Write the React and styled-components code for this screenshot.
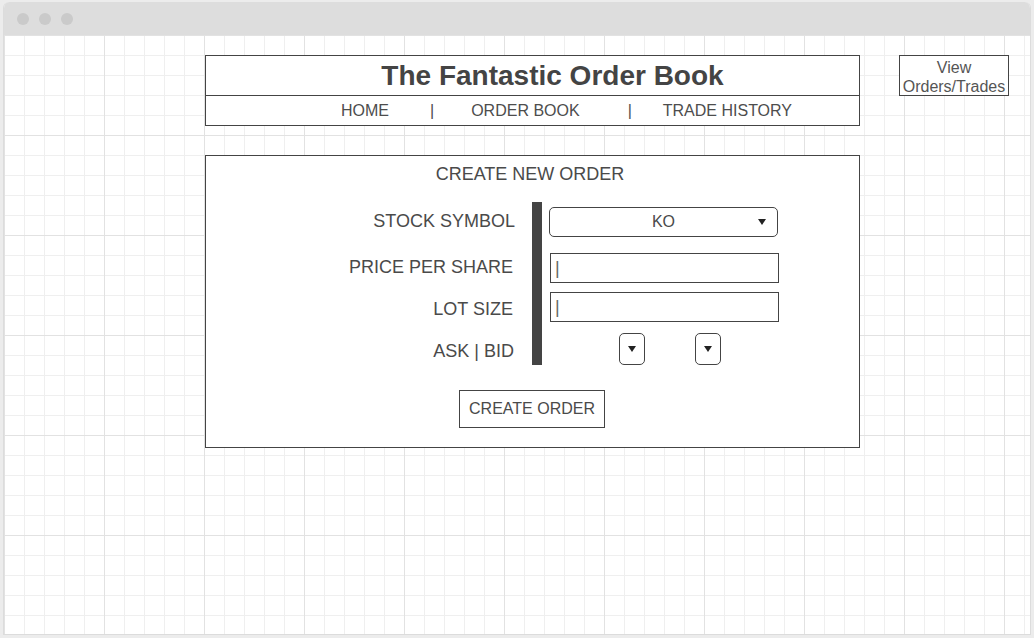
import React from 'react'
import styled, { createGlobalStyle } from 'styled-components';

const GlobalStyle = createGlobalStyle`
    html, body {
        margin: 0;
        padding: 0;
        height: 638px;
        overflow: hidden;
        background: #ececec;
        font-family: "Liberation Sans", Arial, sans-serif;
        color: #4a4a4a;
    }
`;

const Window = styled.div`
    margin: 2px 0 0 3px;
    width: 1026px;
    height: 632px;
    border: 1px solid #dcdcdc;
    border-top: none;
    border-radius: 6px 6px 0 0;
    background: #fff;
    display: flex;
    flex-direction: column;
    overflow: hidden;
`;

const TitleBar = styled.div`
    height: 33px;
    flex-shrink: 0;
    background: #dddddd;
    display: flex;
    align-items: center;
    gap: 10px;
    padding-left: 13px;
`;

const Dot = styled.span`
    width: 12px;
    height: 12px;
    border-radius: 50%;
    background: #cacaca;
`;

const Canvas = styled.div`
    flex: 1;
    display: flex;
    align-items: flex-start;
    padding: 20px 0 0 201px;
    background-color: #fff;
    background-image:
        linear-gradient(to right, #e2e2e2 1px, transparent 1px),
        linear-gradient(to bottom, #e2e2e2 1px, transparent 1px),
        linear-gradient(to right, #efefef 1px, transparent 1px),
        linear-gradient(to bottom, #efefef 1px, transparent 1px);
    background-size: 100px 100px, 100px 100px, 20px 20px, 20px 20px;
    background-position: 0 0;
`;

const MainColumn = styled.div`
    width: 655px;
    display: flex;
    flex-direction: column;
`;

const Header = styled.div`
    border: 1px solid #444;
    background: #fff;
`;

const Title = styled.h1`
    margin: 0;
    height: 39px;
    border-bottom: 1px solid #444;
    display: flex;
    align-items: center;
    justify-content: center;
    padding-left: 40px;
    font-size: 28px;
    font-weight: bold;
    color: #444;
`;

const Nav = styled.nav`
    height: 29px;
    display: flex;
    align-items: center;
    padding-left: 135px;
    font-size: 16px;
    color: #4d4d4d;
`;

const NavItem = styled.span`
    margin-right: ${p => p.$after}px;
`;

const SideButton = styled.div`
    margin-left: 39px;
    box-sizing: border-box;
    width: 110px;
    height: 41px;
    padding-top: 2px;
    border: 1px solid #444;
    background: #fff;
    display: flex;
    flex-direction: column;
    align-items: center;
    justify-content: center;
    font-size: 16px;
    line-height: 19px;
    color: #555;
    text-align: center;
`;

const FormBox = styled.div`
    margin-top: 29px;
    border: 1px solid #444;
    background: #fff;
    padding: 8px 1px 19px 0;
    display: flex;
    flex-direction: column;
    align-items: center;
`;

const FormTitle = styled.div`
    font-size: 18px;
    line-height: 21px;
    color: #4a4a4a;
    margin-right: 4px;
`;

const FormGrid = styled.div`
    margin-top: 17px;
    align-self: stretch;
    display: grid;
    grid-template-columns: 309px 27px 1fr;
    grid-template-rows: 40px 48px 38px 37px;
`;

const Label = styled.div`
    grid-column: 1;
    align-self: ${p => p.$align || 'center'};
    text-align: right;
    padding-right: ${p => p.$pr ?? 2}px;
    margin-top: ${p => p.$mt || 0}px;
    margin-bottom: ${p => p.$mb || 0}px;
    font-size: 18px;
    line-height: 24px;
    color: #4a4a4a;
`;

const Bar = styled.div`
    grid-column: 2;
    grid-row: 1 / span 4;
    margin-left: 17px;
    width: 10px;
    background: #444;
`;

const Field = styled.div`
    grid-column: 3;
    margin-left: ${p => p.$ml}px;
    margin-top: ${p => p.$mt || 0}px;
    align-self: ${p => p.$align || 'center'};
    display: flex;
    gap: ${p => p.$gap || 0}px;
`;

const Select = styled.div`
    position: relative;
    box-sizing: border-box;
    width: ${p => p.$w}px;
    height: ${p => p.$h}px;
    border: 1px solid #444;
    border-radius: 5px;
    background: #fff;
    display: flex;
    align-items: center;
    justify-content: center;
    font-size: 16px;
    color: #4a4a4a;
`;

const Arrow = styled.span`
    position: absolute;
    right: ${p => (p.$center ? 'auto' : '11px')};
    top: 50%;
    transform: translateY(-50%);
    width: 0;
    height: 0;
    border-left: 4px solid transparent;
    border-right: 4px solid transparent;
    border-top: 6px solid #222;
`;

const TextBox = styled.div`
    box-sizing: border-box;
    width: 229px;
    height: 30px;
    border: 1px solid #444;
    background: #fff;
    display: flex;
    align-items: center;
    padding-left: 4px;
    font-size: 18px;
    color: #666;
`;

const Button = styled.button`
    margin-top: 25px;
    width: 146px;
    height: 38px;
    border: 1px solid #444;
    border-radius: 0;
    background: #fff;
    font-family: inherit;
    font-size: 16px;
    color: #4a4a4a;
    padding: 0;
`;

function App() {
    return (
        <>
            <GlobalStyle />
            <Window>
                <TitleBar>
                    <Dot />
                    <Dot />
                    <Dot />
                </TitleBar>
                <Canvas>
                    <MainColumn>
                        <Header>
                            <Title>The Fantastic Order Book</Title>
                            <Nav>
                                <NavItem $after={41}>HOME</NavItem>
                                <NavItem $after={37}>|</NavItem>
                                <NavItem $after={48}>ORDER BOOK</NavItem>
                                <NavItem $after={31}>|</NavItem>
                                <NavItem $after={0}>TRADE HISTORY</NavItem>
                            </Nav>
                        </Header>
                        <FormBox>
                            <FormTitle>CREATE NEW ORDER</FormTitle>
                            <FormGrid>
                                <Label style={{ gridRow: 1 }} $pr={0} $mb={2}>STOCK SYMBOL</Label>
                                <Bar />
                                <Field style={{ gridRow: 1 }} $ml={7}>
                                    <Select $w={229} $h={30}>
                                        KO
                                        <Arrow />
                                    </Select>
                                </Field>

                                <Label style={{ gridRow: 2 }} $mt={2}>PRICE PER SHARE</Label>
                                <Field style={{ gridRow: 2 }} $ml={8} $mt={11} $align="start">
                                    <TextBox>|</TextBox>
                                </Field>

                                <Label style={{ gridRow: 3 }}>LOT SIZE</Label>
                                <Field style={{ gridRow: 3 }} $ml={8} $mt={2} $align="start">
                                    <TextBox>|</TextBox>
                                </Field>

                                <Label style={{ gridRow: 4 }} $align="end" $mb={2} $pr={1}>ASK | BID</Label>
                                <Field style={{ gridRow: 4 }} $ml={77} $gap={50} $align="end">
                                    <Select $w={26} $h={32}>
                                        <Arrow $center />
                                    </Select>
                                    <Select $w={26} $h={32}>
                                        <Arrow $center />
                                    </Select>
                                </Field>
                            </FormGrid>
                            <Button>CREATE ORDER</Button>
                        </FormBox>
                    </MainColumn>
                    <SideButton>
                        <span>View</span>
                        <span>Orders/Trades</span>
                    </SideButton>
                </Canvas>
            </Window>
        </>
    )
}

export default App
